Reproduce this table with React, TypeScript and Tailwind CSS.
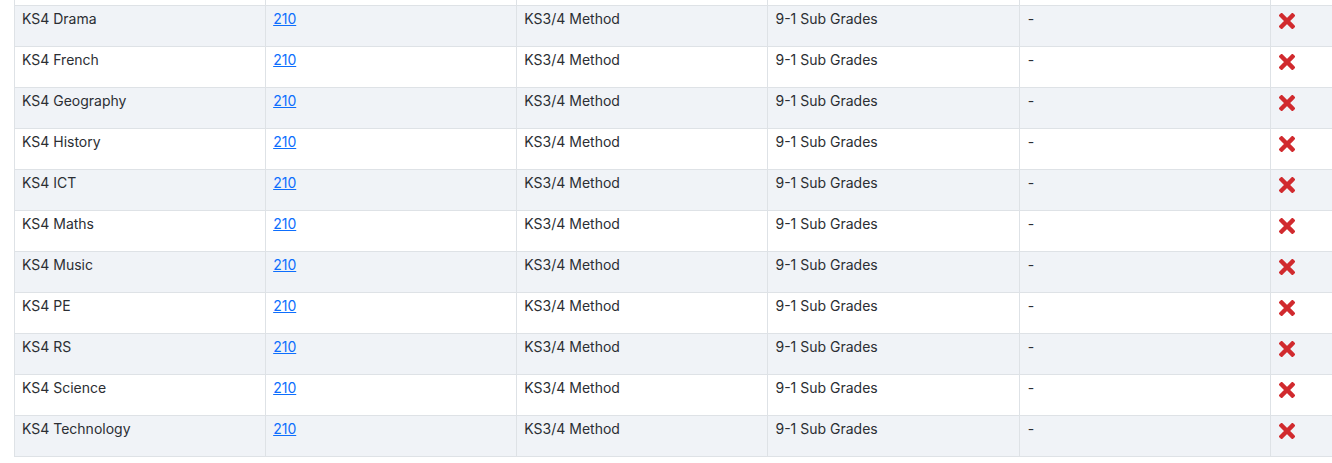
const subjects = [
  '',
  'KS4 Drama',
  'KS4 French',
  'KS4 Geography',
  'KS4 History',
  'KS4 ICT',
  'KS4 Maths',
  'KS4 Music',
  'KS4 PE',
  'KS4 RS',
  'KS4 Science',
  'KS4 Technology',
];

function Cross() {
  return (
    <svg width="16" height="16" viewBox="0 0 16 16" className="block">
      <path
        d="M2.6 2.6 L13.4 13.4 M13.4 2.6 L2.6 13.4"
        stroke="#d12a2e"
        strokeWidth="4.4"
        strokeLinecap="square"
        fill="none"
      />
    </svg>
  );
}

export default function App() {
  return (
    <div
      className="h-[463px] w-[1332px] overflow-hidden bg-white text-[14px] text-[#2b2e33]"
      style={{ fontFamily: 'Inter, "Noto Sans", sans-serif' }}
    >
      <table className="ml-[14px] -mt-[36px] w-[1508px] table-fixed border-collapse">
        <tbody>
          {subjects.map((name, i) => {
            // first row only peeks in above the fold, so it holds no text
            const filled = name !== '';
            return (
              <tr
                key={name || 'top'}
                className={`h-[41px] ${i % 2 === 1 ? 'bg-[#f0f3f7]' : 'bg-white'}`}
              >
                <td className="border border-[#dee2e6] px-[7px] pt-[3px] align-top leading-5">
                  {name}
                </td>
                <td className="border border-[#dee2e6] px-[7px] pt-[3px] align-top leading-5">
                  {filled && (
                    <a href="#" className="text-[#0d6efd] underline">
                      210
                    </a>
                  )}
                </td>
                <td className="border border-[#dee2e6] px-[7px] pt-[3px] align-top leading-5">
                  {filled && 'KS3/4 Method'}
                </td>
                <td className="border border-[#dee2e6] px-[7px] pt-[3px] align-top leading-5">
                  {filled && '9-1 Sub Grades'}
                </td>
                <td className="border border-[#dee2e6] px-[8px] pt-[3px] align-top leading-5">
                  {filled && '-'}
                </td>
                <td className="border border-[#dee2e6] pl-[8px] pt-[7px] align-top">
                  {filled && <Cross />}
                </td>
              </tr>
            );
          })}
        </tbody>
      </table>
    </div>
  );
}
